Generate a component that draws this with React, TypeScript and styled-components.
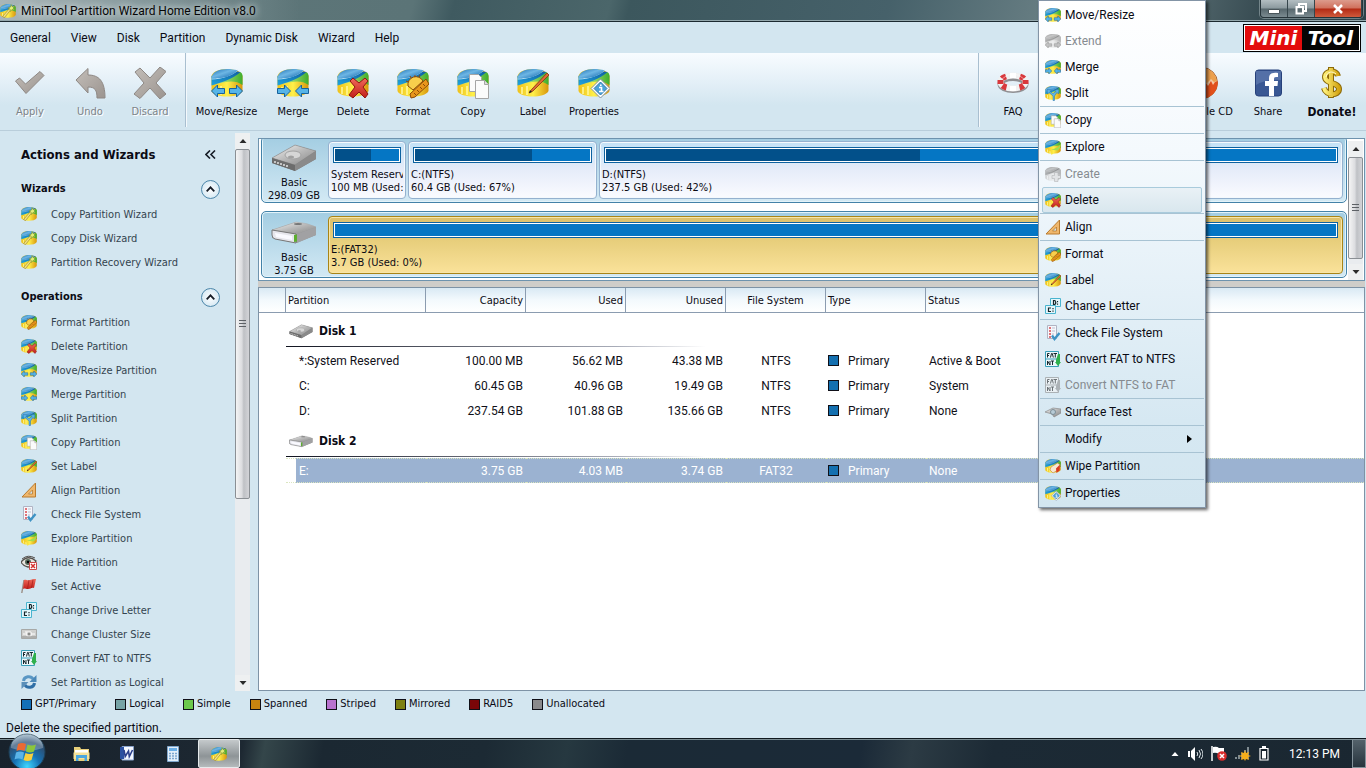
import React from 'react';
import styled, { createGlobalStyle, css } from 'styled-components';

const tahoma = '"DejaVu Sans Condensed", Tahoma, "DejaVu Sans", sans-serif';
const segoe = 'Roboto, "Segoe UI", sans-serif';
const pale = '#d3e6f0';

const GlobalStyle = createGlobalStyle`
  * { box-sizing: border-box; }
  body { margin: 0; background: ${pale}; font: 11px/14px ${tahoma}; color: #0b0b14; }
  button { font: inherit; color: inherit; border: 0; padding: 0; background: none; white-space: nowrap; }
  ul { list-style: none; margin: 0; padding: 0; }
  h1, h2, h3, p { margin: 0; }
  svg { display: block; flex: none; }
`;

/* ---------- shell ---------- */

const Shell = styled.div`
  position: relative;
  display: flex;
  flex-direction: column;
  height: 100vh;
  overflow: hidden;
`;

const TitleBar = styled.header`
  display: flex;
  align-items: center;
  flex: none;
  height: 22px;
  border-bottom: 1px solid #1c2a30;
  box-shadow: inset 0 -1px 0 #93a7ac;
  background:
    linear-gradient(90deg, #a9b6b8 0, #8b9da0 120px, #80939600 300px),
    linear-gradient(105deg, #5f777a 0, #5b7477 400px, #3f5a60 440px, #4b666a 590px, #3c575d 610px, #46616a 860px, #71868a 1060px, #2d4148 1250px);
`;

const WindowTitle = styled.h1`
  flex: 1;
  margin-left: 5px;
  font: 12px/20px ${segoe};
  color: #060606;
  text-shadow: 0 0 6px #dfe8ea, 0 0 8px #cfdadd;
`;

const CaptionButtons = styled.div`
  display: flex;
  align-self: flex-start;
  height: 18px;
  margin-right: 3px;
  border: 1px solid #26343a;
  border-top: 0;
  border-radius: 0 0 4px 4px;
  box-shadow: 0 0 0 1px #a9b7bb88;
  overflow: hidden;
`;

const CaptionButton = styled.button<{ $close?: boolean }>`
  display: grid;
  place-items: center;
  width: ${p => (p.$close ? 47 : 27)}px;
  border-right: 1px solid #35454b;
  background: ${p =>
    p.$close
      ? 'linear-gradient(#dc9b8c 0, #d0705c 48%, #b32a14 52%, #cf5a3c)'
      : 'linear-gradient(#b3bec2 0, #8b999e 48%, #56666c 52%, #7b8b91)'};
`;

const MenuBar = styled.nav`
  display: flex;
  align-items: center;
  flex: none;
  height: 31px;
  padding: 0 5px 0 10px;
  gap: 20px;
  font: 12px/16px ${segoe};
`;

const Brand = styled.div`
  display: flex;
  margin-left: auto;
  border: 1px solid #000;
  padding: 1px;
  background: #fff;
  font: italic bold 20px/24px "DejaVu Sans", Verdana, sans-serif;
  color: #fff;
`;

const BrandPart = styled.span<{ $bg: string }>`
  width: 57px;
  text-align: center;
  background: ${p => p.$bg};
`;

const Toolbar = styled.div`
  display: flex;
  flex: none;
  height: 78px;
  border-bottom: 1px solid #b9cedb;
  background: linear-gradient(#f8fcff 0, #e3eff7 30px, ${pale} 52px);
`;

const ToolGroup = styled.div<{ $wide?: boolean }>`
  display: flex;
  margin-bottom: 3px;
  padding-right: ${p => (p.$wide ? 0 : 5)}px;
  ${p =>
    p.$wide &&
    css`
      flex: 1;
      padding-left: 4px;
      border-left: 1px solid #a9bfd0;
      box-shadow: inset 1px 0 0 #f4f9fc;
    `}
`;

const HelpGroup = styled(ToolGroup)`
  flex: 0 0 388px;
`;

const ToolButton = styled.button<{ $w?: number; $bold?: boolean; $push?: boolean }>`
  display: flex;
  flex-direction: column;
  align-items: center;
  width: ${p => p.$w ?? 60}px;
  padding-top: 14px;
  gap: 6px;
  margin-left: ${p => (p.$push ? 'auto' : 0)};
  font: ${p => (p.$bold ? 'bold 12px' : '11px')}/14px ${tahoma};
  &:disabled { color: #7d8388; text-shadow: 1px 1px 0 #fff; }
`;

const Body = styled.main`
  display: flex;
  flex: 1;
  min-height: 0;
`;

/* ---------- side panel ---------- */

const Side = styled.aside`
  display: flex;
  flex: none;
  width: 258px;
  padding-right: 8px;
`;

const SideContent = styled.div`
  flex: 1;
  overflow: hidden;
  padding: 0 15px 0 21px;
`;

const SideHeader = styled.div`
  display: flex;
  align-items: center;
  justify-content: space-between;
  height: 45px;
  padding-top: 2px;
  font: bold 13px/16px ${tahoma};
  h2 { font: inherit; }
  button { width: 20px; display: grid; place-items: center; }
`;

const SideSection = styled.section`
  padding-bottom: 10px;
`;

const SectionHeader = styled.div`
  display: flex;
  align-items: center;
  justify-content: space-between;
  height: 26px;
  h3 { font: bold 11px/16px ${tahoma}; }
`;

const RoundToggle = styled.button`
  display: grid;
  place-items: center;
  width: 19px;
  height: 19px;
  border: 1px solid #4d87aa;
  border-radius: 50%;
  background: radial-gradient(#fff, #c9e2f0);
`;

const SideLink = styled.button`
  display: flex;
  align-items: center;
  gap: 14px;
  height: 24px;
  color: #34444f;
  span { padding-top: 2px; }
`;

/* ---------- scroll bar ---------- */

const ScrollTrack = styled.div`
  display: flex;
  flex-direction: column;
  flex: none;
  width: 15px;
  margin-top: 2px;
  background: #e9ecef;
`;

const ScrollArrow = styled.button`
  display: grid;
  place-items: center;
  height: 16px;
  background: #eef0f1;
`;

const ScrollThumb = styled.div<{ $grow: number }>`
  display: grid;
  place-items: center;
  flex: ${p => p.$grow};
  border: 1px solid #8a8f94;
  border-radius: 2px;
  background: linear-gradient(90deg, #f4f4f4, #dcdde0 45%, #bfc1c5 60%, #d3d4d8);
`;

const ScrollRest = styled.div<{ $grow: number }>`
  flex: ${p => p.$grow};
`;

/* ---------- disk map ---------- */

const Content = styled.div`
  display: flex;
  flex-direction: column;
  flex: 1;
  min-width: 0;
  padding: 7px 1px 0 0;
`;

const DiskMap = styled.section`
  display: flex;
  flex: none;
  height: 143px;
  padding: 0 1px 0 2px;
  gap: 1px;
  border: 1px solid #6e93ae;
  background: #fff;
  overflow: hidden;
`;

const DiskList = styled.div`
  display: flex;
  flex-direction: column;
  flex: 1;
  min-width: 0;
  gap: 8px;
  margin-top: -3px;
`;

const DiskRow = styled.div`
  display: flex;
  flex: none;
  height: 67px;
  padding-right: 3px;
  gap: 2px;
  border: 1px solid #4382a8;
  border-radius: 5px;
  background: linear-gradient(#a3cde2, #d3e9f4);
  box-shadow: inset 0 0 0 1px #e3f3fa;
`;

const DiskCell = styled.div`
  flex: none;
  width: 64px;
  padding-top: 7px;
  line-height: 13px;
  text-align: center;
  svg { margin: 0 auto 4px; }
`;

const Volume = styled.div<{ $width?: number; $selected?: boolean }>`
  flex: ${p => (p.$width ? `0 0 ${p.$width}px` : '1')};
  min-width: 0;
  margin: 4px 0 3px;
  padding: 5px 2px 0;
  border: 1px solid ${p => (p.$selected ? '#a98416' : '#94b1cf')};
  border-radius: 4px;
  background: ${p =>
    p.$selected ? 'linear-gradient(#dcc06b, #e8cf7d 45%, #fae29a)' : 'linear-gradient(#c3e2f6, #e6ecf9 50%, #fafbff)'};
  box-shadow: inset 0 0 0 1px ${p => (p.$selected ? '#f7e6a8' : '#f4f9fd')};
  line-height: 13px;
  white-space: nowrap;
  p { overflow: hidden; }
`;

const UsageBar = styled.div<{ $used: number }>`
  height: 16px;
  margin: 0 2px 5px;
  border: 1px solid #0d62a0;
  background: linear-gradient(90deg, #02508a ${p => p.$used}%, #0576c4 ${p => p.$used}%) content-box, #fff;
  padding: 1px;
`;

const Splitter = styled.div`
  flex: none;
  height: 6px;
  background: #cfcdc9;
`;

/* ---------- partition table ---------- */

const TablePane = styled.section`
  flex: 1;
  min-height: 0;
  border: 1px solid #7e93a6;
  background: #fff;
  overflow: hidden;
`;

const Table = styled.table`
  width: 100%;
  table-layout: fixed;
  border-collapse: separate;
  border-spacing: 0;
`;

type Align = 'left' | 'right' | 'center';

const HeadCell = styled.th<{ $w?: number; $align?: Align }>`
  width: ${p => (p.$w ? `${p.$w}px` : 'auto')};
  height: 25px;
  padding: 2px 2px 0;
  font-weight: normal;
  text-align: ${p => p.$align ?? 'left'};
  border-bottom: 1px solid #8b9cb0;
  border-right: ${p => (p.$w ? '1px solid #8b9cb0' : '0')};
  background: linear-gradient(#d9e9f4, #f3f9fd 50%, #fff);
`;

const GroupCell = styled.th`
  height: 35px;
  padding: 0;
  font: bold 12px/16px ${tahoma};
  text-align: left;
`;

const GroupLabel = styled.div`
  display: flex;
  align-items: center;
  gap: 6px;
  height: 33px;
  padding: 2px 0 0 3px;
  border-bottom: 1px solid;
  border-image: linear-gradient(90deg, #10131f 0, #a8acb8 330px, #fff 420px) 1;
`;

const DataRow = styled.tr<{ $selected?: boolean }>`
  font: 12px/16px ${segoe};
  color: ${p => (p.$selected ? '#fff' : '#101018')};
  td + td {
    ${p =>
      p.$selected &&
      css`
        background: #9bb2d1;
        border-top: 1px dotted #dbe6c0;
        border-bottom: 1px dotted #dbe6c0;
      `}
  }
  td:nth-child(2) {
    ${p => p.$selected && 'background: linear-gradient(90deg, #fff 10px, #9bb2d1 10px);'}
  }
`;

const Cell = styled.td<{ $align?: Align; $indent?: number }>`
  height: 25px;
  padding: 0 3px 0 ${p => p.$indent ?? 3}px;
  text-align: ${p => p.$align ?? 'left'};
  white-space: nowrap;
`;

const TypeCell = styled(Cell)`
  padding-left: 2px;
  div {
    display: flex;
    align-items: center;
    gap: 9px;
  }
`;

const Swatch = styled.span<{ $color: string }>`
  flex: none;
  width: 11px;
  height: 11px;
  border: 1px solid #101018;
  background: ${p => p.$color};
`;

/* ---------- footer ---------- */

const Legend = styled.ul`
  display: flex;
  align-items: center;
  flex: none;
  gap: 19px;
  height: 26px;
  padding-left: 21px;
  li { display: flex; align-items: center; gap: 3px; }
`;

const StatusText = styled.p`
  flex: none;
  height: 21px;
  padding: 3px 6px 2px;
  font: 12px/16px ${segoe};
`;

const TaskBar = styled.footer`
  display: flex;
  align-items: stretch;
  flex: none;
  height: 30px;
  border-top: 1px solid #10191f;
  box-shadow: inset 0 1px 0 #7d8e94;
  background: linear-gradient(100deg, #18222c 0, #1d2832 240px, #34464a 262px, #1b2832 320px, #1c2a34 480px, #263840 560px, #1b2a36 620px, #1b2a38 850px, #2c3b44 900px, #1c2a35 980px, #1a2731 100%);
`;

const StartButton = styled.button`
  position: relative;
  width: 58px;
  svg { position: absolute; left: 8px; top: -6px; }
`;

const TaskButton = styled.button<{ $active?: boolean }>`
  display: grid;
  place-items: center;
  width: ${p => (p.$active ? 42 : 46)}px;
  ${p =>
    p.$active &&
    css`
      margin-left: 2px;
      border: 1px solid #e6eaec;
      border-radius: 2px;
      background: linear-gradient(#c4c9cb, #8e9497 60%, #b5babc);
    `}
`;

const Tray = styled.div`
  display: flex;
  align-items: center;
  gap: 8px;
  margin-left: auto;
  font: 12px/16px ${segoe};
  color: #fff;
  time { margin: 0 4px 0 12px; }
`;

const ShowDesktop = styled.button`
  align-self: stretch;
  width: 14px;
  border: 1px solid #84929a;
  background: linear-gradient(#54626b, #27343d);
`;

/* ---------- context menu ---------- */

const ContextMenu = styled.ul`
  position: absolute;
  z-index: 5;
  top: 0;
  right: 160px;
  width: 168px;
  padding: 1px;
  border: 1px solid #8394a6;
  background: linear-gradient(#fff 0, #f4f9fd 150px, #d6e8f2 420px, ${pale});
  box-shadow: 2px 2px 3px #0009;
`;

const MenuEntry = styled.li<{ $last?: boolean }>`
  padding: 0 2px;
  border-bottom: ${p => (p.$last ? '1px solid #a8c3d3' : '0')};
`;

const MenuButton = styled.button<{ $hot?: boolean }>`
  display: flex;
  align-items: center;
  gap: 4px;
  width: 100%;
  height: 26px;
  padding: 0 8px 0 2px;
  border: 1px solid ${p => (p.$hot ? '#a9cbdc' : 'transparent')};
  border-radius: 2px;
  background: ${p => (p.$hot ? 'linear-gradient(#e9f1f6, #d9e7ee)' : 'none')};
  font: 12px/16px ${segoe};
  &:disabled { color: #868b90; }
  span { flex: 1; text-align: left; }
`;

/* ---------- drawings ---------- */

const Paints = () => (
  <svg width="0" height="0" aria-hidden="true">
    <defs>
      <linearGradient id="blue" x1="0" y1="0" x2="1" y2="1">
        <stop offset="0" stopColor="#1d6fb4" /><stop offset=".45" stopColor="#6db6e4" /><stop offset="1" stopColor="#0c5fa8" />
      </linearGradient>
      <linearGradient id="band" x1="1" y1="0" x2="0" y2="1">
        <stop offset="0" stopColor="#0f5c9e" /><stop offset="1" stopColor="#1fa3de" />
      </linearGradient>
      <linearGradient id="green"><stop offset="0" stopColor="#c9ef8a" /><stop offset="1" stopColor="#3fae2c" /></linearGradient>
      <linearGradient id="yellow">
        <stop offset="0" stopColor="#eec11a" /><stop offset=".5" stopColor="#fff04a" /><stop offset="1" stopColor="#d8960c" />
      </linearGradient>
      <linearGradient id="metal" x1="0" y1="0" x2="1" y2="1">
        <stop offset="0" stopColor="#f6f6f6" /><stop offset=".5" stopColor="#b8b8b8" /><stop offset="1" stopColor="#858585" />
      </linearGradient>
      <linearGradient id="stone" x1="0" y1="0" x2="1" y2="1">
        <stop offset="0" stopColor="#c3beb9" /><stop offset="1" stopColor="#9b948f" />
      </linearGradient>
      <linearGradient id="red" x1="0" y1="0" x2="0" y2="1"><stop offset="0" stopColor="#f06a5a" /><stop offset="1" stopColor="#c21f1a" /></linearGradient>
      <linearGradient id="gold"><stop offset="0" stopColor="#fff27c" /><stop offset="1" stopColor="#d3a411" /></linearGradient>
      <radialGradient id="orb" cx=".5" cy=".9" r=".9">
        <stop offset="0" stopColor="#3fd6ff" /><stop offset=".4" stopColor="#1672b4" /><stop offset=".75" stopColor="#2c4f73" /><stop offset="1" stopColor="#9db7c8" />
      </radialGradient>
    </defs>
  </svg>
);

const arrow = 'l6 -6v3.500h7v5h-7v3.500z';
const overlays: Record<string, React.ReactNode> = {
  move: (
    <g fill="#55b4e8" stroke="#17629c">
      <path d={`M.5 24${arrow}`} />
      <path transform="matrix(-1 0 0 1 32 0)" d={`M.5 24${arrow}`} />
    </g>
  ),
  merge: (
    <g fill="#55b4e8" stroke="#17629c">
      <path transform="matrix(-1 0 0 1 14 0)" d={`M.5 24${arrow}`} />
      <path transform="translate(18)" d={`M.5 24${arrow}`} />
    </g>
  ),
  delete: <path d="M13 14l3-3 6 5 6-5 3 3-5 6 5 7-3 4-6-6-6 6-4-3 6-8z" fill="url(#red)" stroke="#8f1512" />,
  format: (
    <g fill="#e8961c" stroke="#8c4a08">
      <path d="M11 19a8 8 0 0 1 15-5l-10 9z" fill="#f8cf4c" />
      <path d="M13 27L29 12l3 5-14 13-4 1z" />
      <path d="M17 26l2 2M20 23l2 2M23 20l2 2M26 17l2 2" />
      <path d="M9 14l2 1M13 9l1 2M18 8v2M23 8l-1 2" />
    </g>
  ),
  copy: (
    <g fill="#fbfbfb" stroke="#a5a5a5">
      <path d="M12.500 7.500h9l3 3v14h-12z" />
      <path d="M18.500 13.500h9l4 4v14h-13z" />
      <path d="M27.500 13.500v4h4" fill="#ddd" />
    </g>
  ),
  label: (
    <g>
      <path d="M12 26l3-4L30 6l2 2-16 16z" fill="#e06a35" stroke="#84360f" strokeWidth=".8" />
      <path d="M12 26l1-3 2 2z" fill="#222" />
    </g>
  ),
  properties: (
    <g>
      <path d="M22.500 12L32 21.500 22.500 31 13 21.500z" fill="#fff" stroke="#7d8f9e" />
      <path d="M22.500 15L29 21.500 22.500 28 16 21.500z" fill="#4da3d8" stroke="#2f79ae" />
      <path d="M21 20.500h2.500v4M21 24.500h4.500M22.800 17.500v1.500" stroke="#fff" strokeWidth="1.600" fill="none" />
    </g>
  ),
  split: <path d="M16 31v-9L8 15l-3 3-1-9 9 1-3 3 6 4 6-4-3-3 9-1-1 9-3-3-5 7v9z" fill="#5eb4e6" stroke="#1f6ca6" />,
  explore: (
    <g>
      <path d="M31 12c1 8-4 14-11 14l-7 6-1-7c-4-1-7-3-8-6z" fill="url(#yellow)" />
      <path d="M31 9c-2 7-10 10-19 12l13 2c5-3 7-8 6-14z" fill="#a5dc4e" />
    </g>
  ),
  create: <path d="M19 13h7v6h5v6h-5v6h-7v-6h-5v-6h5z" fill="#c4e79a" stroke="#5b9a2e" />,
  wipe: (
    <g>
      <path d="M12 18l13-8 6 4-4 9-11 7-6-6z" fill="#f6e8d4" stroke="#b26b28" />
      <path d="M22 21l8-8-1 12-6 5z" fill="#d93a22" />
    </g>
  ),
  wizard: (
    <g>
      <path d="M5 27L19 11l3 2L9 29z" fill="#f5e27e" stroke="#7d6a1f" />
      <path d="M22 3l2 4 5-1-3 4 3 4-5-1-3 4-1-5-4-2 5-2z" fill="#e4ee78" stroke="#6f8a1c" />
    </g>
  ),
};

const DriveIcon = ({ kind, size = 16, gray }: { kind: string; size?: number; gray?: boolean }) => (
  <svg width={size} height={size} viewBox="0 0 32 32" filter={gray ? 'grayscale(1) opacity(.65)' : undefined} aria-hidden="true">
    <path d="M.5 9C2 4 9 2 16 2s14 2 15.500 7v15c-2 4-9 5.500-15.500 5.500S2 28 .5 24z" fill="url(#yellow)" />
    <path d="M29 5c2 1 2.500 2.500 2.500 4v9C25 13 16 14 6 17z" fill="url(#green)" />
    <path d="M5 20v7M10 19v9" stroke="#fff7a0" strokeWidth="1.500" />
    <path d="M.5 9v9.500C9 16 22 12 29.500 5L16 3z" fill="url(#band)" />
    <path d="M.5 12C10 12 22 8 27 3" fill="none" stroke="#b9dff5" />
    <path d="M.5 11C1 5 8 2 16 2c4 0 8 .5 10.500 1.500C21 9 11 12 .5 11z" fill="url(#blue)" />
    {overlays[kind]}
  </svg>
);

const HardDisk = ({ small, external }: { small?: boolean; external?: boolean }) => (
  <svg width={small ? 24 : 46} height={small ? 15 : 28} viewBox="0 0 46 28" aria-hidden="true">
    {external ? (
      <g>
        <path d="M1 11L25 3l20 5v8L25 24 1 19z" fill="#8d8d8d" />
        <path d="M1 11L25 3q12 1 20 5L25 15z" fill="url(#metal)" stroke="#aaa" strokeWidth=".5" />
        <path d="M1 11l24 4v9L4 20q-3-1-3-4z" fill="#e6e6ec" stroke="#777" />
        <path d="M4 14l17 3v4L5 18z" fill="#fafaff" />
        <path d="M23 16l3-.5v7L23 23z" fill="#5cae2e" />
        <path d="M26 15l19-7v8l-19 8z" fill="#a1a1a3" />
        <ellipse cx="27" cy="5" rx="4" ry="1" fill="#777" />
      </g>
    ) : (
      <g>
        <path d="M1 14L24 1l21 6v8L24 27 1 19z" fill="#7b7b7b" />
        <path d="M1 14L24 1l21 6-21 14z" fill="url(#metal)" stroke="#8d8d8d" strokeWidth=".6" />
        <path d="M1 14l23 7v6L1 19z" fill="#6c6c6c" />
        <path d="M4 17v2m3-1v2m3-1v2m3-1v2m3-1v2" stroke="#e9e9e9" strokeWidth="1.400" />
        <path d="M24 21l21-14v8L24 27z" fill="#8a8a8a" />
        <ellipse cx="22" cy="11" rx="8" ry="4" fill="#d6d6d6" stroke="#a3a3a3" />
        <ellipse cx="20" cy="13" rx="3" ry="1.600" fill="#a0a0a0" />
      </g>
    )}
  </svg>
);

const Fat = ({ gray }: { gray?: boolean }) => (
  <svg width="16" height="16" viewBox="0 0 16 16" filter={gray ? 'grayscale(1) opacity(.6)' : undefined} aria-hidden="true">
    <path d="M.5.5h13v15H.5z" fill="#eaf6fa" stroke="#3a9fb8" />
    <path d="M1 8h12" stroke="#3a9fb8" />
    <path d="M13 3h2v8h1l-3 4-3-4h1V9z" fill="#2fb04c" />
    <path d="M2.500 6.500v-4h2m-2 2h1.500M5.500 6.500l1-4h.8l1 4M8.500 2.500h3.500m-1.700 0v4M2.500 14v-4l2.500 4v-4M6 10h3m-1.500 0v4" stroke="#17262b" fill="none" />
  </svg>
);

const Misc = ({ kind, gray }: { kind: string; gray?: boolean }) => {
  if (kind === 'fat') return <Fat gray={gray} />;
  return (
    <svg width="16" height="16" viewBox="0 0 16 16" aria-hidden="true">
      {kind === 'align' && (
        <g>
          <path d="M14.500 1v14H1z" fill="#efb76c" stroke="#b97b2e" />
          <path d="M11.500 8v4H7.500z" fill={pale} stroke="#b97b2e" strokeWidth=".8" />
        </g>
      )}
      {kind === 'check' && (
        <g>
          <path d="M2.500.5h9v13h-9z" fill="#f6f7fb" stroke="#b0b4c4" />
          <path d="M4 3h2M4 6h2M4 9h2M4 12h2" stroke="#d84a50" strokeWidth="1.500" />
          <path d="M7 3h3M7 6h3M7 9h2" stroke="#b9bfd2" />
          <path d="M7 10.500l2.500 3.500L14.500 8" stroke="#3f93c4" strokeWidth="2.400" fill="none" />
        </g>
      )}
      {kind === 'hide' && (
        <g>
          <path d="M0 8q7-8 15-1-3 6-8 6-5-1-7-5z" fill="#e8e4de" stroke="#54504c" strokeWidth="1.300" />
          <path d="M1 5q6-5 13-1" stroke="#54504c" fill="none" />
          <circle cx="7" cy="8" r="3" fill="#55695a" /><circle cx="7" cy="8" r="1.300" />
          <path d="M8.500 8.500h7v7h-7z" fill="#fff" stroke="#c84a4a" />
          <path d="M10 10l4 4m0-4l-4 4" stroke="#d5302c" strokeWidth="1.500" />
        </g>
      )}
      {kind === 'active' && (
        <g>
          <path d="M3 2L.8 15" stroke="#9a8d84" strokeWidth="1.400" />
          <path d="M3 2c2-1 3 1 6 0s4-1 6-1l-2 9c-3-1-3 1-6 1s-3-1-5 0z" fill="url(#red)" />
          <path d="M8 2L6.500 11M12 1.500L10.500 10" stroke="#a11b18" strokeWidth=".7" />
        </g>
      )}
      {kind === 'letter' && (
        <g>
          <path d="M5.500.5h10v8h-10z" fill="#e3f6fb" stroke="#49b4cf" />
          <path d="M.5 7.500h10v8H.5z" fill="#e3f6fb" stroke="#49b4cf" />
          <path d="M8.500 2.500v4h1.500q1.500-2 0-4zM12.500 3v1.200m0 1.300v1.200M6 10H3.500v3.500H6M8 10v1.200m0 1.300v1.200" stroke="#17262b" strokeWidth="1.200" fill="none" />
        </g>
      )}
      {kind === 'cluster' && (
        <g>
          <path d="M.5 3.500h15v9H.5z" fill="#cfd0ce" stroke="#a7a8a6" />
          <path d="M2 8h4m4 0h4M6 6h4v4H6zM5 5v2" stroke="#fff" fill="#8b8c8a" />
          <path d="M1 11h14" stroke="#8b8c8a" />
        </g>
      )}
      {kind === 'logical' && (
        <g fill="none" strokeWidth="3">
          <path d="M2.500 7C3 2 10 1.500 12 5" stroke="#5a97c4" />
          <path d="M13.500 9C13 14 6 14.500 4 11" stroke="#2f6fa6" />
          <path d="M15.500 1v7H8.500z" fill="#4a88b8" />
          <path d="M.5 15V8h7z" fill="#5a8fb8" />
        </g>
      )}
      {kind === 'surface' && (
        <g>
          <path d="M0 8l8-4 8 1v4l-7 4-2-3z" fill="url(#metal)" stroke="#8a8a8a" strokeWidth=".7" />
          <circle cx="8" cy="8" r="2.500" fill="#b7cbd6" stroke="#7c8d96" />
        </g>
      )}
    </svg>
  );
};

const misc = ['fat', 'align', 'check', 'hide', 'active', 'letter', 'cluster', 'logical', 'surface'];
const SmallIcon = ({ kind, gray }: { kind: string; gray?: boolean }) =>
  misc.includes(kind) ? <Misc kind={kind} gray={gray} /> : <DriveIcon kind={kind} gray={gray} />;

const BigIcon = ({ kind }: { kind: string }) => {
  if (overlays[kind]) return <DriveIcon kind={kind} size={32} />;
  return (
    <svg width="32" height="32" viewBox="0 0 32 32" aria-hidden="true">
      {kind === 'apply' && <path d="M1.500 14l4-3 6 6L26 4.500l4 4L12 26.500z" fill="url(#stone)" stroke="#8e8884" />}
      {kind === 'undo' && <path d="M2 13L14 1.500V8c11 0 17 6 17 23h-8c0-8-2-11-9-11v6z" fill="url(#stone)" stroke="#8e8884" />}
      {kind === 'discard' && <path d="M1 5l5-4 10 10L26 0l6 4.500L22 16l10 11-6 5-10-11L6 31.500 0 27l10-11z" fill="url(#stone)" stroke="#8e8884" />}
      {kind === 'faq' && (
        <g fill="none">
          <ellipse cx="16" cy="17" rx="12.500" ry="6" stroke="#8f8f92" strokeWidth="6" />
          <ellipse cx="16" cy="15" rx="12.500" ry="6.500" stroke="#f1f1f1" strokeWidth="6" />
          <path d="M3.500 13v4M28.500 13v4M9 9.500q-3 1-4 2M23 9.500q3 1 4 2M5.500 18.500q2 1.500 4 2M26.500 18.500q-2 1.500-4 2" stroke="#d8383c" strokeWidth="6" />
          <path d="M13 8.500h6M13 21.500h6" stroke="#fff" strokeWidth="5" />
          <path d="M5 12q5-5 11-5t11 5" stroke="#ffffff77" />
        </g>
      )}
      {kind === 'cd' && (
        <g>
          <circle cx="16" cy="16" r="15.500" fill="#f4c9a4" stroke="#a8602c" />
          <path d="M31.500 14a15.500 15.500 0 0 1-15.500 17.500V20l4-4 2 3 3-5 2 4 2-3z" fill="#e2501b" />
          <path d="M18 1a15.500 15.500 0 0 1 13 13l-3 1-3-3-6 6z" fill="#eca04e" />
          <circle cx="16" cy="16" r="4" fill="#fff" />
        </g>
      )}
      {kind === 'share' && (
        <g>
          <rect x="3.500" y="3" width="26" height="26" rx="3" fill="#395793" stroke="#26407a" />
          <path d="M4 4h25v9Q14 12 4 18z" fill="#6f8abb" opacity=".5" />
          <path d="M17 29V19h-4v-5h4v-3c0-4 3-6 9-5v4c-3 0-4 0-4 2v2h4l-.5 5H22v10z" fill="#fff" />
        </g>
      )}
      {kind === 'donate' && (
        <g fill="none">
          <path d="M15 0v31M22 9c-1-6-13-6-13 1 0 7 14 5 14 12 0 7-13 7-15-1" stroke="#8c6a08" strokeWidth="6" />
          <path d="M15 1v29M22 9c-1-6-13-6-13 1 0 7 14 5 14 12 0 7-13 7-15-1" stroke="url(#gold)" strokeWidth="4" />
          <path d="M20 7c-3-3-9-3-10 3" stroke="#fffbd0" />
        </g>
      )}
    </svg>
  );
};

const Triangle = ({ d, color = '#2b2b2b' }: { d: string; color?: string }) => (
  <svg width="8" height="8" viewBox="0 0 8 8" aria-hidden="true"><path d={d} fill={color} /></svg>
);
const up = 'M4 2l3.500 4h-7z';
const down = 'M4 6L.5 2h7z';

const Scroll = ({ thumb, rest }: { thumb: number; rest: number }) => (
  <ScrollTrack>
    <ScrollArrow aria-label="Up"><Triangle d={up} /></ScrollArrow>
    <ScrollThumb $grow={thumb}>
      <svg width="7" height="9" viewBox="0 0 7 9" aria-hidden="true"><path d="M0 .5h7M0 3.500h7M0 6.500h7" stroke="#5d6166" /></svg>
    </ScrollThumb>
    <ScrollRest $grow={rest} />
    <ScrollArrow aria-label="Down"><Triangle d={down} /></ScrollArrow>
  </ScrollTrack>
);

/* ---------- data ---------- */

const sections = [
  { title: 'Wizards', items: [['wizard', 'Copy Partition Wizard'], ['wizard', 'Copy Disk Wizard'], ['wizard', 'Partition Recovery Wizard']] },
  {
    title: 'Operations',
    items: [
      ['format', 'Format Partition'], ['delete', 'Delete Partition'], ['move', 'Move/Resize Partition'], ['merge', 'Merge Partition'],
      ['split', 'Split Partition'], ['copy', 'Copy Partition'], ['label', 'Set Label'], ['align', 'Align Partition'],
      ['check', 'Check File System'], ['explore', 'Explore Partition'], ['hide', 'Hide Partition'], ['active', 'Set Active'],
      ['letter', 'Change Drive Letter'], ['cluster', 'Change Cluster Size'], ['fat', 'Convert FAT to NTFS'], ['logical', 'Set Partition as Logical'],
    ],
  },
];

type Entry = { icon?: string; text: string; off?: boolean; hot?: boolean; sub?: boolean; last?: boolean };
const entries: Entry[] = [
  { icon: 'move', text: 'Move/Resize' },
  { icon: 'move', text: 'Extend', off: true },
  { icon: 'merge', text: 'Merge' },
  { icon: 'split', text: 'Split', last: true },
  { icon: 'copy', text: 'Copy', last: true },
  { icon: 'explore', text: 'Explore', last: true },
  { icon: 'create', text: 'Create', off: true },
  { icon: 'delete', text: 'Delete', hot: true, last: true },
  { icon: 'align', text: 'Align', last: true },
  { icon: 'format', text: 'Format' },
  { icon: 'label', text: 'Label' },
  { icon: 'letter', text: 'Change Letter', last: true },
  { icon: 'check', text: 'Check File System' },
  { icon: 'fat', text: 'Convert FAT to NTFS' },
  { icon: 'fat', text: 'Convert NTFS to FAT', off: true, last: true },
  { icon: 'surface', text: 'Surface Test', last: true },
  { text: 'Modify', sub: true, last: true },
  { icon: 'wipe', text: 'Wipe Partition', last: true },
  { icon: 'properties', text: 'Properties' },
];

const disks = [
  { name: 'Disk 1', external: false, rows: [
    ['*:System Reserved', '100.00 MB', '56.62 MB', '43.38 MB', 'NTFS', 'Active & Boot'],
    ['C:', '60.45 GB', '40.96 GB', '19.49 GB', 'NTFS', 'System'],
    ['D:', '237.54 GB', '101.88 GB', '135.66 GB', 'NTFS', 'None'],
  ] },
  { name: 'Disk 2', external: true, rows: [['E:', '3.75 GB', '4.03 MB', '3.74 GB', 'FAT32', 'None']] },
];

const legend = [
  ['#1470b8', 'GPT/Primary'], ['#76a3a6', 'Logical'], ['#6cc94c', 'Simple'], ['#c88410', 'Spanned'],
  ['#b873cf', 'Striped'], ['#7d8010', 'Mirrored'], ['#7b0608', 'RAID5'], ['#8a8a8c', 'Unallocated'],
];

const BlankIcon = styled.i`
  width: 16px;
`;

export default function App() {
  return (
    <Shell>
      <GlobalStyle />
      <Paints />
      <TitleBar>
        <DriveIcon kind="wizard" />
        <WindowTitle>MiniTool Partition Wizard Home Edition v8.0</WindowTitle>
        <CaptionButtons>
          <CaptionButton aria-label="Minimize">
            <svg width="12" height="12" viewBox="0 0 12 12"><path d="M.5 6.500h11v4H.5z" fill="#fff" stroke="#4a565b" /></svg>
          </CaptionButton>
          <CaptionButton aria-label="Restore">
            <svg width="12" height="12" viewBox="0 0 12 12"><path d="M4 3V1h7v7H9M1.500 4h6.500v6.500H1.500z" fill="none" stroke="#fff" strokeWidth="2" /></svg>
          </CaptionButton>
          <CaptionButton $close aria-label="Close">
            <svg width="12" height="12" viewBox="0 0 12 12"><path d="M2 2l8 8m0-8l-8 8" stroke="#fff" strokeWidth="2.500" /></svg>
          </CaptionButton>
        </CaptionButtons>
      </TitleBar>

      <MenuBar>
        {['General', 'View', 'Disk', 'Partition', 'Dynamic Disk', 'Wizard', 'Help'].map(m => <button key={m}>{m}</button>)}
        <Brand><BrandPart $bg="#e30b0b">Mini</BrandPart><BrandPart $bg="#050505">Tool</BrandPart></Brand>
      </MenuBar>

      <Toolbar>
        <ToolGroup>
          <ToolButton disabled><BigIcon kind="apply" />Apply</ToolButton>
          <ToolButton disabled><BigIcon kind="undo" />Undo</ToolButton>
          <ToolButton disabled><BigIcon kind="discard" />Discard</ToolButton>
        </ToolGroup>
        <ToolGroup $wide>
          <ToolButton $w={73}><BigIcon kind="move" />Move/Resize</ToolButton>
          <ToolButton><BigIcon kind="merge" />Merge</ToolButton>
          <ToolButton><BigIcon kind="delete" />Delete</ToolButton>
          <ToolButton><BigIcon kind="format" />Format</ToolButton>
          <ToolButton><BigIcon kind="copy" />Copy</ToolButton>
          <ToolButton><BigIcon kind="label" />Label</ToolButton>
          <ToolButton $w={62}><BigIcon kind="properties" />Properties</ToolButton>
        </ToolGroup>
        <HelpGroup $wide>
          <ToolButton><BigIcon kind="faq" />FAQ</ToolButton>
          <ToolButton $w={72} $push><BigIcon kind="cd" />Bootable CD</ToolButton>
          <ToolButton><BigIcon kind="share" />Share</ToolButton>
          <ToolButton $w={68} $bold><BigIcon kind="donate" />Donate!</ToolButton>
        </HelpGroup>
      </Toolbar>

      <Body>
        <Side>
          <SideContent>
            <SideHeader>
              <h2>Actions and Wizards</h2>
              <button aria-label="Collapse panel">
                <svg width="11" height="9" viewBox="0 0 11 9"><path d="M5 .5l-4 4 4 4M10 .5l-4 4 4 4" stroke="#161c26" strokeWidth="1.600" fill="none" /></svg>
              </button>
            </SideHeader>
            {sections.map(s => (
              <SideSection key={s.title}>
                <SectionHeader>
                  <h3>{s.title}</h3>
                  <RoundToggle aria-label={`Collapse ${s.title}`}>
                    <svg width="9" height="6" viewBox="0 0 9 6"><path d="M.7 5.300l3.800-4 3.800 4" stroke="#161c26" strokeWidth="1.800" fill="none" /></svg>
                  </RoundToggle>
                </SectionHeader>
                <ul>
                  {s.items.map(([icon, text]) => (
                    <li key={text}><SideLink><SmallIcon kind={icon} /><span>{text}</span></SideLink></li>
                  ))}
                </ul>
              </SideSection>
            ))}
          </SideContent>
          <Scroll thumb={348} rest={176} />
        </Side>

        <Content>
          <DiskMap>
            <DiskList>
              <DiskRow>
                <DiskCell><HardDisk /><p>Basic</p><p>298.09 GB</p></DiskCell>
                <Volume $width={78}><UsageBar $used={57} /><p>System Reserv</p><p>100 MB (Used:</p></Volume>
                <Volume $width={189}><UsageBar $used={67} /><p>C:(NTFS)</p><p>60.4 GB (Used: 67%)</p></Volume>
                <Volume><UsageBar $used={43} /><p>D:(NTFS)</p><p>237.5 GB (Used: 42%)</p></Volume>
              </DiskRow>
              <DiskRow>
                <DiskCell><HardDisk external /><p>Basic</p><p>3.75 GB</p></DiskCell>
                <Volume $selected><UsageBar $used={0} /><p>E:(FAT32)</p><p>3.7 GB (Used: 0%)</p></Volume>
              </DiskRow>
            </DiskList>
            <Scroll thumb={102} rest={5} />
          </DiskMap>
          <Splitter />
          <TablePane>
            <Table>
              <thead>
                <tr>
                  <HeadCell $w={27} aria-label="Drive" />
                  <HeadCell $w={140}>Partition</HeadCell>
                  <HeadCell $w={100} $align="right">Capacity</HeadCell>
                  <HeadCell $w={100} $align="right">Used</HeadCell>
                  <HeadCell $w={100} $align="right">Unused</HeadCell>
                  <HeadCell $w={100} $align="center">File System</HeadCell>
                  <HeadCell $w={100}>Type</HeadCell>
                  <HeadCell>Status</HeadCell>
                </tr>
              </thead>
              {disks.map(d => (
                <tbody key={d.name}>
                  <tr>
                    <td />
                    <GroupCell colSpan={7}><GroupLabel><HardDisk small external={d.external} />{d.name}</GroupLabel></GroupCell>
                  </tr>
                  {d.rows.map(r => (
                    <DataRow key={r[0]} $selected={d.external}>
                      <td />
                      <Cell $indent={13}>{r[0]}</Cell>
                      <Cell $align="right">{r[1]}</Cell>
                      <Cell $align="right">{r[2]}</Cell>
                      <Cell $align="right">{r[3]}</Cell>
                      <Cell $align="center">{r[4]}</Cell>
                      <TypeCell><div><Swatch $color="#1470b0" />Primary</div></TypeCell>
                      <Cell>{r[5]}</Cell>
                    </DataRow>
                  ))}
                </tbody>
              ))}
            </Table>
          </TablePane>
        </Content>
      </Body>

      <Legend>
        {legend.map(([c, t]) => <li key={t}><Swatch $color={c} />{t}</li>)}
      </Legend>
      <StatusText>Delete the specified partition.</StatusText>

      <TaskBar>
        <StartButton aria-label="Start">
          <svg width="38" height="38" viewBox="0 0 38 38">
            <circle cx="19" cy="19" r="18" fill="url(#orb)" stroke="#1d3f56" />
            <path d="M3 15a16 16 0 0 1 32 0q-16 6-32 0z" fill="#ffffff44" />
            <path d="M10 11q4-2 8 0l-1.500 7q-4-2-8 0z" fill="#ea6a33" />
            <path d="M19.500 11.500q4 2 8.500 0l-2 7q-4 2-8 0z" fill="#8cc63c" />
            <path d="M8 19.500q4-2 8 0l-1.500 7q-4-2-8 0z" fill="#5bb4e8" />
            <path d="M17.500 20q4 2 8 0l-2 7q-4 2-8 0z" fill="#f8cf3c" />
          </svg>
        </StartButton>
        <TaskButton aria-label="Explorer">
          <svg width="17" height="16" viewBox="0 0 17 16">
            <path d="M1 1h6l1 2h8v12H1z" fill="#e8cf7a" /><path d="M2 4h13v3H2z" fill="#fff" />
            <path d="M.5 6.500h16V13H.5z" fill="#f6e29a" /><path d="M3 15V9h11v6h-2.500v-3h-6v3z" fill="#4aa6df" />
          </svg>
        </TaskButton>
        <TaskButton aria-label="Word">
          <svg width="15" height="15" viewBox="0 0 15 15">
            <path d="M2 .5h11.500v13.500H2z" fill="#f4f8ff" stroke="#8aa3cc" /><path d="M0 1h4v12H0z" fill="#2b50a0" />
            <path d="M4 4l1.200 6.500L8.500 5l.8 5.500L12.500 4" stroke="#2b3f8c" strokeWidth="1.600" fill="none" />
          </svg>
        </TaskButton>
        <TaskButton aria-label="Calculator">
          <svg width="12" height="16" viewBox="0 0 12 16">
            <path d="M.5.5h11v15H.5z" fill="#e4effa" stroke="#7fa6cc" /><path d="M2 2h8v3H2z" fill="#6cb0e8" />
            <path d="M2 7.500h8M2 10h8M2 12.500h8" stroke="#7ba6d0" strokeWidth="1.500" strokeDasharray="2 1" />
          </svg>
        </TaskButton>
        <TaskButton $active aria-label="MiniTool Partition Wizard"><DriveIcon kind="wizard" /></TaskButton>

        <Tray>
          <Triangle d={up} color="#fff" />
          <svg width="16" height="14" viewBox="0 0 16 14">
            <path d="M1 4h2v6H1zM4 4l4-4v14l-4-4z" fill="#fff" />
            <path d="M10 5q1.500 2 0 4M12 3q3 4 0 8M14 2q4 5 0 10" stroke="#dfe6ea" fill="none" />
          </svg>
          <svg width="16" height="15" viewBox="0 0 16 15">
            <path d="M1 0v15" stroke="#fff" strokeWidth="1.500" /><path d="M2 1q4-1 6 1h5v6H8Q5 6 2 7z" fill="#fff" />
            <circle cx="11" cy="10" r="4.800" fill="#d92c2c" /><path d="M9 8l4 4m0-4l-4 4" stroke="#fff" strokeWidth="1.500" />
          </svg>
          <svg width="16" height="14" viewBox="0 0 16 14">
            <path d="M1 12v-2M4 12V8M7 12V6M10 12V3M13 12V0" stroke="#7f8b91" strokeWidth="2" />
            <path d="M10 3l1 3 3-1-1 3 3 1-3 1 1 3-3-1-1 2-1-2-3 1 1-3-3-1 3-1-1-3 3 1z" fill="#f5ae1b" />
          </svg>
          <svg width="10" height="15" viewBox="0 0 10 15">
            <path d="M3 0h4v2H3z" fill="#fff" /><path d="M1 2.500h8v11.500H1z" fill="#17212a" stroke="#fff" strokeWidth="1.200" /><path d="M3 5h4v7.500H3z" fill="#fff" />
          </svg>
          <time>12:13 PM</time>
          <ShowDesktop aria-label="Show desktop" />
        </Tray>
      </TaskBar>

      <ContextMenu>
        {entries.map(e => (
          <MenuEntry key={e.text} $last={e.last}>
            <MenuButton disabled={e.off} $hot={e.hot}>
              {e.icon ? <SmallIcon kind={e.icon} gray={e.off} /> : <BlankIcon />}
              <span>{e.text}</span>
              {e.sub && <Triangle d="M2 0l5 4-5 4z" color="#000" />}
            </MenuButton>
          </MenuEntry>
        ))}
      </ContextMenu>
    </Shell>
  );
}
